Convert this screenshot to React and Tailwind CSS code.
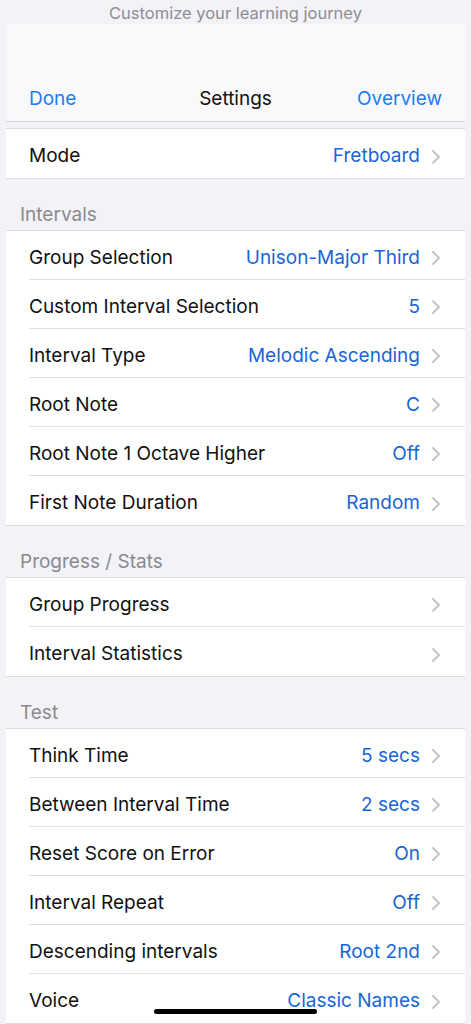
import React from "react";

const font = { fontFamily: "Inter, 'Noto Sans', sans-serif" };

function Chevron() {
  return (
    <svg width="10" height="16" viewBox="0 0 10 16" className="ml-[11px] shrink-0">
      <polyline points="2,2 8,8 2,14" fill="none" stroke="#c4c4c7" strokeWidth="2" strokeLinecap="round" strokeLinejoin="round" />
    </svg>
  );
}

function Row({ label, value, last }) {
  return (
    <div className="flex h-[49px] items-stretch bg-white pl-[23px]">
      <div className={`flex flex-1 items-center pr-[24px] pt-[6px] ${last ? "" : "border-b border-[#e0e0e4]"}`}>
        <span className="flex-1 text-[19px] text-[#111]">{label}</span>
        {value && <span className="text-[19px] text-[#1766d6]">{value}</span>}
        <Chevron />
      </div>
    </div>
  );
}

function Group({ rows }) {
  return (
    <div className="border-y border-[#dcdce0]">
      {rows.map((r, i) => (
        <Row key={r[0]} label={r[0]} value={r[1]} last={i === rows.length - 1} />
      ))}
    </div>
  );
}

function Header({ title }) {
  return (
    <div className="flex h-[51px] items-end pb-[1px] pl-[14px] text-[19px] text-[#8a8a8e]">
      {title}
    </div>
  );
}

export default function App() {
  return (
    <div className="relative min-h-[1024px] overflow-hidden bg-[#f2f2f7]" style={font}>
      <div className="flex h-[24px] items-center justify-center pt-[3px] text-[16.5px] leading-none text-[#8e8e93]">
        Customize your learning journey
      </div>
      <div className="mx-[6px]">
        <div className="flex h-[98px] items-end justify-between border-b border-[#d6d6da] bg-[#f9f9fb] px-[23px] pb-[8px]">
          <span className="w-[100px] text-[19px] text-[#1b7cf4]">Done</span>
          <span className="text-[19px] text-[#111]">Settings</span>
          <span className="w-[100px] text-right text-[19px] text-[#1b7cf4]">Overview</span>
        </div>
        <div className="h-[6px]" />
        <Group rows={[["Mode", "Fretboard"]]} />
        <Header title="Intervals" />
        <Group
          rows={[
            ["Group Selection", "Unison-Major Third"],
            ["Custom Interval Selection", "5"],
            ["Interval Type", "Melodic Ascending"],
            ["Root Note", "C"],
            ["Root Note 1 Octave Higher", "Off"],
            ["First Note Duration", "Random"],
          ]}
        />
        <Header title="Progress / Stats" />
        <Group
          rows={[
            ["Group Progress", ""],
            ["Interval Statistics", ""],
          ]}
        />
        <Header title="Test" />
        <Group
          rows={[
            ["Think Time", "5 secs"],
            ["Between Interval Time", "2 secs"],
            ["Reset Score on Error", "On"],
            ["Interval Repeat", "Off"],
            ["Descending intervals", "Root 2nd"],
            ["Voice", "Classic Names"],
          ]}
        />
      </div>
      <div className="absolute left-[154px] top-[1009px] h-[5px] w-[163px] rounded-full bg-black" />
    </div>
  );
}
